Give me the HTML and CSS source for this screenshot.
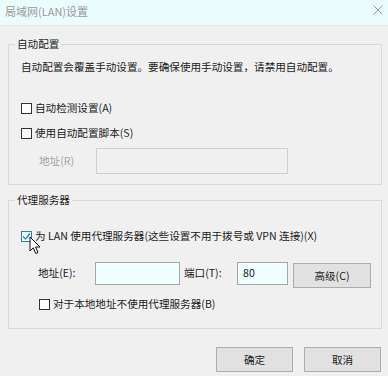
FILE: index.html
```html
<!DOCTYPE html>
<html>
<head>
  <title>局域网(LAN)设置</title>
  <meta charset=utf-8>
  <meta name=viewport content="width=device-width, initial-scale=1">
  <link rel="stylesheet" href="styles.css">
</head>
<body>
<div class="dialog">
  <div class="titlebar">
    <span class="title">局域网(LAN)设置</span>
    <svg class="close" width="10" height="10" viewBox="0 0 10 10">
      <path d="M0.5 0.5 L9.5 9.5 M9.5 0.5 L0.5 9.5" stroke="#9a9a9a" stroke-width="1" fill="none"/>
    </svg>
  </div>

  <fieldset class="group auto">
    <legend>自动配置</legend>
    <div class="desc">自动配置会覆盖手动设置。要确保使用手动设置，请禁用自动配置。</div>
    <label class="check first"><span class="box"></span>自动检测设置(A)</label>
    <label class="check second"><span class="box"></span>使用自动配置脚本(S)</label>
    <div class="row script">
      <span class="lbl disabled">地址(R)</span>
      <span class="input wide off"></span>
    </div>
  </fieldset>

  <fieldset class="group proxy">
    <legend>代理服务器</legend>
    <label class="check lan"><span class="box on">
      <svg width="9" height="9" viewBox="0 0 9 9"><path d="M1 4.5 L3.5 7 L8 1.5" stroke="#2a7dd6" stroke-width="1.3" fill="none"/></svg>
    </span>为 LAN 使用代理服务器(这些设置不用于拨号或 VPN 连接)(X)</label>
    <div class="row addr">
      <span class="lbl">地址(E):</span>
      <span class="input host"></span>
      <span class="lbl port">端口(T):</span>
      <span class="input num">80</span>
      <span class="btn adv">高级(C)</span>
    </div>
    <label class="check local"><span class="box"></span>对于本地地址不使用代理服务器(B)</label>
    <svg class="cursor" width="13" height="19" viewBox="0 0 13 19">
      <path d="M1 1 L1 15 L4.3 11.8 L6.8 17.5 L9 16.5 L6.6 11 L11 11 Z" fill="#fff" stroke="#111" stroke-width="1" stroke-linejoin="round"/>
    </svg>
  </fieldset>

  <div class="actions">
    <span class="btn">确定</span>
    <span class="btn">取消</span>
  </div>
</div>
</body>
</html>
```

FILE: styles.css
```css
html {
  padding: 0;
  margin: 0;
}
body {
  margin: 0;
  padding: 0;
  background-color: #f0f0f0;
  font-family: "Noto Sans CJK SC", "Noto Sans", sans-serif;
  font-size: 10.6px;
  color: #1b1b1b;
}
.dialog {
  width: 388px;
  height: 376px;
  overflow: hidden;
}
.titlebar {
  height: 25px;
  background-color: #ebfcfd;
  border-bottom: 1px solid #f0e4e2;
  display: flex;
  justify-content: space-between;
  align-items: flex-start;
  padding: 0 5px 0 5px;
}
.title {
  margin-top: 4px;
  font-size: 11px;
  line-height: 14px;
  color: #9a9a9a;
}
.close {
  margin-top: 5px;
}
.group {
  position: relative;
  margin: 0 6px 0 8px;
  padding: 0 8px 0 6px;
  border: 1px solid #d9d9d9;
  min-width: 0;
}
.group legend {
  padding: 0 2px;
  line-height: 14px;
}
.auto {
  margin-top: 11px;
  padding-bottom: 10px;
}
.proxy {
  margin-top: 8px;
  padding-bottom: 17px;
}
.desc {
  margin: 9px 0 0 6px;
  line-height: 14px;
}
.check {
  display: flex;
  align-items: center;
  line-height: 14px;
  margin-left: 6px;
}
.box {
  width: 9px;
  height: 9px;
  border: 1px solid #333;
  background-color: #fbffff;
  margin-right: 3px;
  display: flex;
  align-items: center;
  justify-content: center;
}
.box.on {
  border-color: #2a7dd6;
}
.first {
  margin-top: 27px;
}
.second {
  margin-top: 11px;
}
.row {
  display: flex;
  align-items: flex-start;
}
.script {
  margin: 8px 0 0 24px;
  align-items: center;
}
.lbl {
  line-height: 14px;
}
.script .lbl {
  width: 57px;
}
.disabled {
  color: #a3a3a3;
}
.input {
  box-sizing: border-box;
  height: 23px;
  border: 1px solid #a6a6a6;
  background-color: #effefe;
  line-height: 20px;
  padding-left: 5px;
}
.wide {
  width: 192px;
  height: 26px;
}
.off {
  border-color: #d0d0d0;
  background-color: #f0f0f0;
}
.lan {
  margin-top: 22px;
}
.addr {
  margin: 19px 0 0 23px;
}
.addr .lbl {
  width: 57px;
  margin-top: 4px;
}
.addr .port {
  width: 53px;
  margin-left: 4px;
}
.host {
  width: 85px;
}
.num {
  width: 51px;
}
.btn {
  box-sizing: border-box;
  display: flex;
  align-items: center;
  justify-content: center;
  width: 77px;
  height: 25px;
  border: 1px solid #adadad;
  background-color: #e1e1e1;
}
.adv {
  width: 78px;
  margin: 1px 0 0 5px;
}
.local {
  margin: 9px 0 0 24px;
}
.cursor {
  position: absolute;
  left: 20px;
  top: 29px;
}
.actions {
  display: flex;
  justify-content: flex-end;
  gap: 11px;
  margin: 18px 7px 0 0;
}
```
